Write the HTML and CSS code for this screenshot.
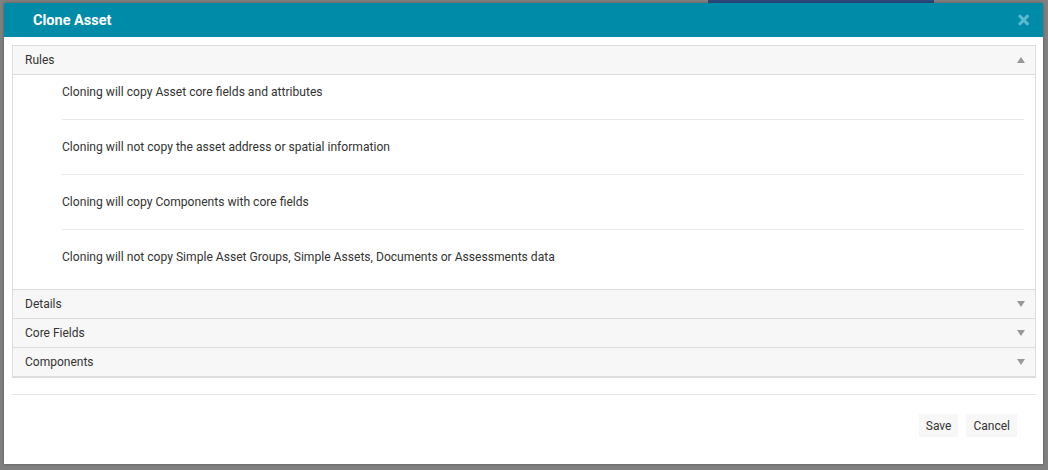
FILE: index.html
```html
<!DOCTYPE html>
<html lang="en">
<head>
    <meta charset="UTF-8">
    <title>Clone Asset</title>
    <link rel="stylesheet" href="styles.css">
</head>
<body>
    <div class="backdrop">
        <div class="page-strip"></div>

        <div class="modal">
            <div class="modal-header">
                <h3>Clone Asset</h3>
                <span class="close">&times;</span>
            </div>

            <div class="modal-body">
                <div class="panel-group">
                    <div class="panel open">
                        <div class="panel-heading">
                            <span>Rules</span>
                            <span class="caret up"></span>
                        </div>
                        <ul class="rules">
                            <li>Cloning will copy Asset core fields and attributes</li>
                            <li>Cloning will not copy the asset address or spatial information</li>
                            <li>Cloning will copy Components with core fields</li>
                            <li>Cloning will not copy Simple Asset Groups, Simple Assets, Documents or Assessments data</li>
                        </ul>
                    </div>
                    <div class="panel">
                        <div class="panel-heading">
                            <span>Details</span>
                            <span class="caret"></span>
                        </div>
                    </div>
                    <div class="panel">
                        <div class="panel-heading">
                            <span>Core Fields</span>
                            <span class="caret"></span>
                        </div>
                    </div>
                    <div class="panel">
                        <div class="panel-heading">
                            <span>Components</span>
                            <span class="caret"></span>
                        </div>
                    </div>
                </div>
            </div>

            <div class="modal-footer">
                <button class="btn">Save</button>
                <button class="btn">Cancel</button>
            </div>
        </div>
    </div>
</body>
</html>
```

FILE: styles.css
```css
body {
    margin: 0;
    font-family: 'Roboto', 'Liberation Sans', sans-serif;
    background-color: #808080;
    width: 1048px;
    height: 470px;
    overflow: hidden;
}
.backdrop {
    position: relative;
    height: 470px;
    padding-top: 3px;
    box-sizing: border-box;
}
/* bit of the page showing above the dialog */
.page-strip {
    position: absolute;
    top: 0;
    left: 708px;
    width: 226px;
    height: 3px;
    background-color: #2c4a7e;
}
.modal {
    position: relative;
    margin-left: 4px;
    width: 1039px;
    height: 461px;
    background-color: white;
    box-shadow: 0 0 3px rgba(0,0,0,0.3);
    display: flex;
    flex-direction: column;
}
.modal-header {
    height: 34px;
    background-color: #008ba8;
    display: flex;
    align-items: center;
    justify-content: space-between;
    padding: 0 13px 0 29px;
}
.modal-header h3 {
    margin: 0;
    color: white;
    font-size: 14.5px;
    font-weight: bold;
}
.close {
    color: #5cbccf;
    font-size: 24px;
    font-weight: bold;
    line-height: 1;
}
.modal-body {
    padding: 8px 7px 0 8px;
}
.panel-group {
    border: 1px solid #dddddd;
    border-bottom-width: 2px;
}
.panel + .panel {
    border-top: 1px solid #dddddd;
}
.panel-heading {
    height: 28px;
    background-color: #f7f7f7;
    display: flex;
    align-items: center;
    justify-content: space-between;
    padding: 0 10px 0 12px;
    font-size: 12px;
    color: #333;
}
.panel.open .panel-heading {
    border-bottom: 1px solid #dddddd;
}
.caret {
    width: 0;
    height: 0;
    border-left: 4px solid transparent;
    border-right: 4px solid transparent;
    border-top: 6px solid #999;
}
.caret.up {
    border-top: none;
    border-bottom: 6px solid #999;
}
.rules {
    list-style: none;
    margin: 0;
    padding: 0 11px 5px 49px;
}
.rules li {
    padding: 20px 0 20px;
    line-height: 14px;
    font-size: 12.1px;
    color: #333;
}
.rules li:first-child {
    padding-top: 10px;
}
.rules li + li {
    border-top: 1px solid #e8e8e8;
}
.modal-footer {
    margin: 16px 7px 0 8px;
    border-top: 1px solid #e5e5e5;
    display: flex;
    justify-content: flex-end;
    gap: 8px;
    padding: 19px 19px 0 0;
}
.btn {
    font-family: inherit;
    font-size: 12px;
    color: #333;
    background-color: #f7f7f7;
    border: none;
    height: 23px;
    padding: 0 7px;
}
```
